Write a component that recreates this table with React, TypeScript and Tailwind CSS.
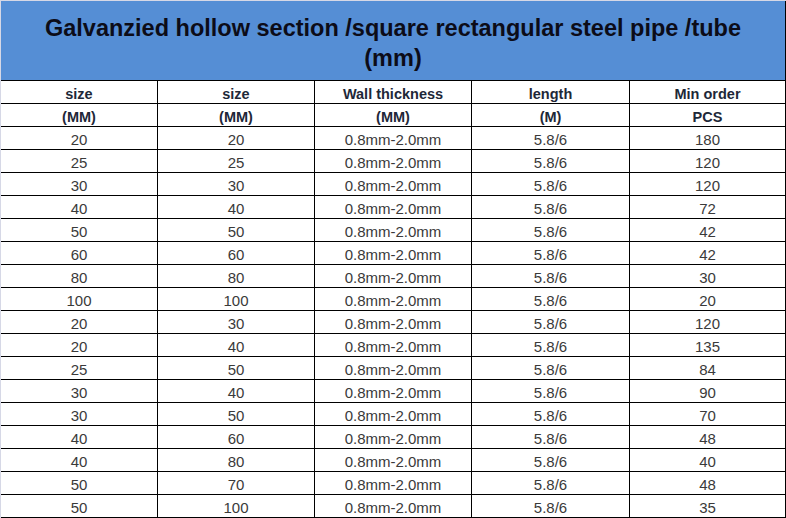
const rows: [string, string, string][] = [
  ['20', '20', '180'],
  ['25', '25', '120'],
  ['30', '30', '120'],
  ['40', '40', '72'],
  ['50', '50', '42'],
  ['60', '60', '42'],
  ['80', '80', '30'],
  ['100', '100', '20'],
  ['20', '30', '120'],
  ['20', '40', '135'],
  ['25', '50', '84'],
  ['30', '40', '90'],
  ['30', '50', '70'],
  ['40', '60', '48'],
  ['40', '80', '40'],
  ['50', '70', '48'],
  ['50', '100', '35'],
];

const cols = 'grid grid-cols-[157px_157px_157px_158px_156px] h-[23px] border-b border-black';
const cell = 'flex items-center justify-center border-r border-black';

const Row = ({ cells, head }: { cells: string[]; head?: boolean }) => (
  <div className={cols}>
    {cells.map((c, i) => (
      <div
        key={i}
        className={`${cell} ${head ? 'pt-[3px] font-bold text-[14.5px] text-[#1e2838]' : 'pt-[2px] text-[15px] text-[#3a3a3a]'}`}
      >
        {c}
      </div>
    ))}
  </div>
);

export default function App() {
  return (
    <div
      className="w-[786px] h-[518px] bg-white border-l border-t border-[#d6d8e6] overflow-hidden"
      style={{ fontFamily: '"Liberation Sans", Arial, sans-serif' }}
    >
      {/* Title */}
      <div className="h-[80px] bg-[#558ed5] border-b border-r border-black flex flex-col items-center justify-center pt-[4px]">
        <div className="text-[23.5px] font-bold leading-[30px] text-[#0c0c18] text-center">
          Galvanzied hollow section /square rectangular steel pipe /tube
          <br />
          (mm)
        </div>
      </div>

      <Row head cells={['size', 'size', 'Wall thickness', 'length', 'Min order']} />
      <Row head cells={['(MM)', '(MM)', '(MM)', '(M)', 'PCS']} />
      {rows.map((r, i) => (
        <Row key={i} cells={[r[0], r[1], '0.8mm-2.0mm', '5.8/6', r[2]]} />
      ))}
    </div>
  );
}
